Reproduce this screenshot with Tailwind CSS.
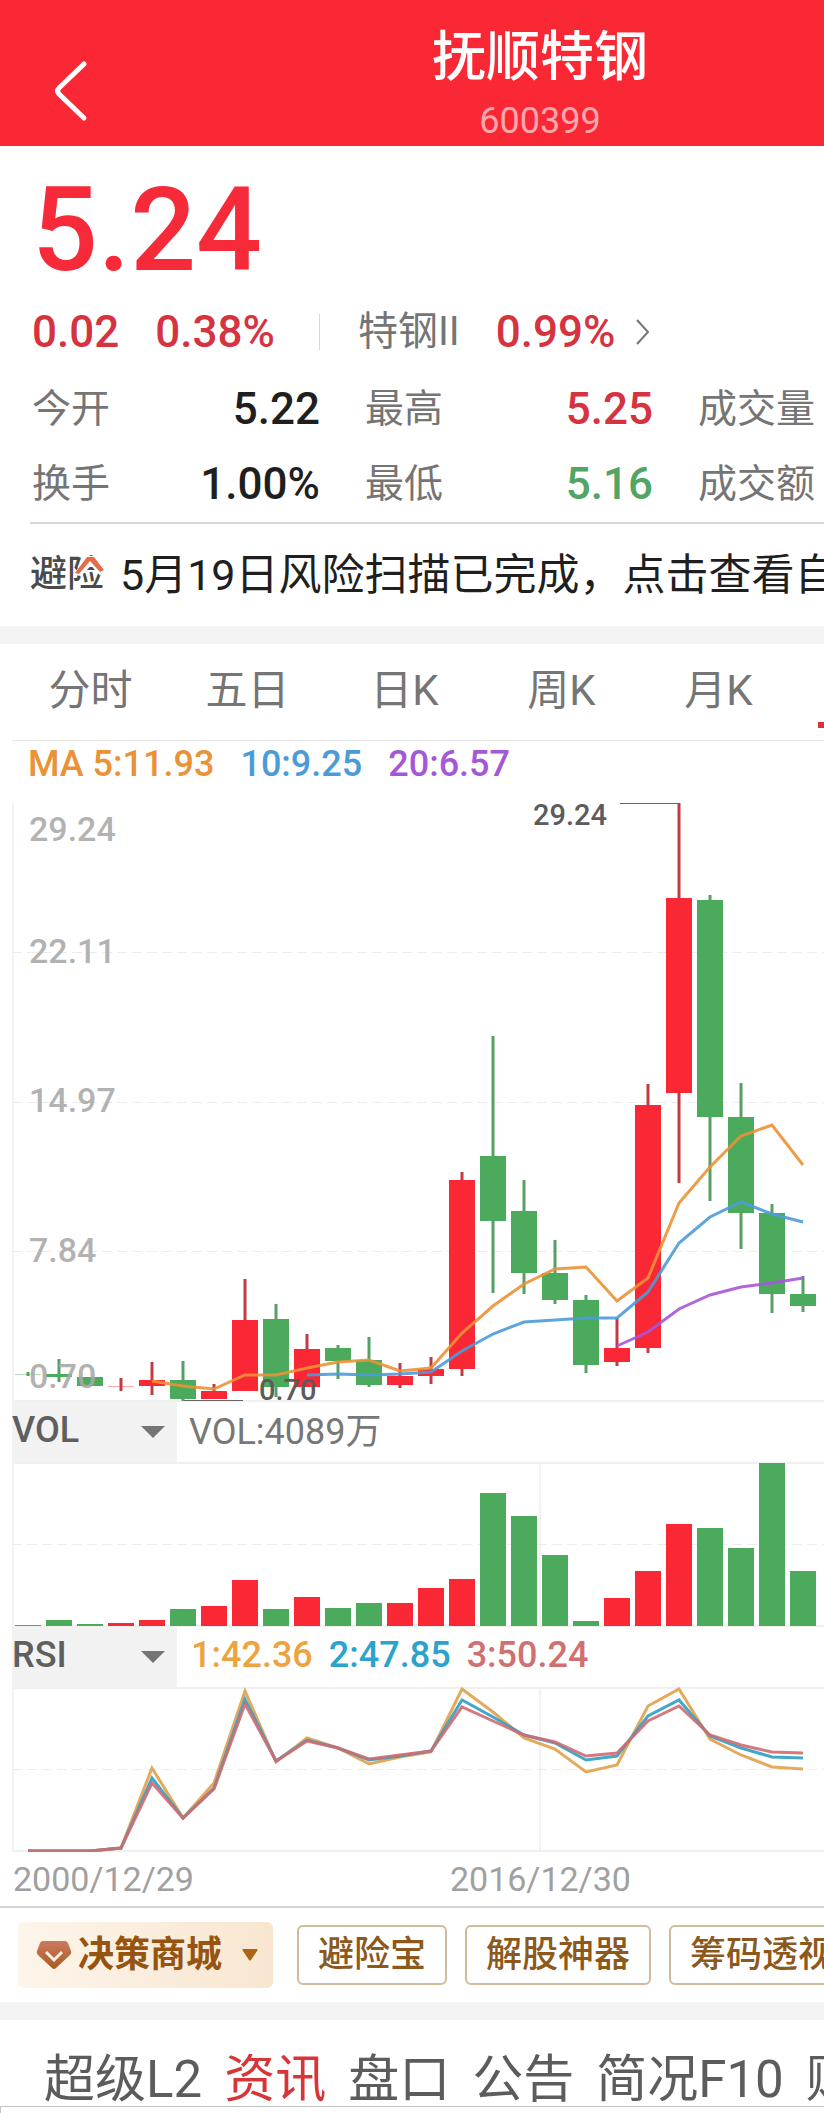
<!DOCTYPE html>
<html lang="zh-CN">
<head>
  <meta charset="UTF-8" />
  <meta name="viewport" content="width=device-width, initial-scale=1" />
  <title>抚顺特钢 600399</title>
  <script src="https://cdn.jsdelivr.net/npm/@tailwindcss/browser@4"></script>
</head>
<body class="bg-white min-h-screen overflow-x-hidden whitespace-nowrap font-['Roboto','Noto_Sans_CJK_SC',sans-serif]">

  <!-- Header -->
  <header class="flex h-[146px] bg-[#fa2734] text-white">
    <button class="w-64 shrink-0 pl-13 pt-9" aria-label="返回">
      <svg class="w-10 h-16" viewBox="0 0 40 64" fill="none" stroke="currentColor" stroke-width="5" stroke-linecap="round" stroke-linejoin="round">
        <path d="M32 5 L7 29 Q4 32 7 35 L32 59" />
      </svg>
    </button>
    <div class="flex-1 pt-[26px] text-center">
      <h1 class="text-[54px] leading-[64px] font-medium">抚顺特钢</h1>
      <p class="mt-2 text-[36px] leading-[46px] text-white/60">600399</p>
    </div>
  </header>

  <!-- Quote -->
  <section class="pt-6 pl-8 overflow-hidden">
    <div class="text-[116px] leading-[120px] font-medium text-[#f62a38]">5.24</div>

    <div class="mt-3 flex h-[60px] items-center text-[44px] font-medium text-[#d5333f]">
      <span>0.02</span>
      <span class="ml-9">0.38%</span>
      <span class="ml-11 h-9 w-px bg-[#d8d8d8]"></span>
      <a href="#" class="ml-[38px] flex items-center">
        <span class="text-[40px] font-normal text-[#757575]">特钢II</span>
        <span class="ml-9">0.99%</span>
        <svg class="ml-5 h-7 w-4" viewBox="0 0 16 28" fill="none" stroke="#757575" stroke-width="2">
          <path d="M2 2 L13 14 L2 26" />
        </svg>
      </a>
    </div>

    <dl class="mt-[10px] flex gap-[45px] text-[44px] font-medium leading-[75px] text-[#1f1f1f]">
      <div class="grid w-72 shrink-0 grid-cols-[auto_auto] justify-between">
        <dt class="text-[39px] font-normal text-[#757575]">今开</dt>
        <dd class="text-right">5.22</dd>
        <dt class="text-[39px] font-normal text-[#757575]">换手</dt>
        <dd class="text-right">1.00%</dd>
      </div>
      <div class="grid w-72 shrink-0 grid-cols-[auto_auto] justify-between">
        <dt class="text-[39px] font-normal text-[#757575]">最高</dt>
        <dd class="text-right text-[#d5333f]">5.25</dd>
        <dt class="text-[39px] font-normal text-[#757575]">最低</dt>
        <dd class="text-right text-[#52a564]">5.16</dd>
      </div>
      <div class="w-72 shrink-0 text-[39px] font-normal text-[#757575]">
        <dt>成交量</dt>
        <dt>成交额</dt>
      </div>
    </dl>
  </section>

  <!-- Risk notice -->
  <a href="#" class="ml-[30px] flex h-[104px] items-center overflow-hidden border-t-2 border-[#d8d8d8]">
    <span class="relative text-[37px] font-medium text-[#4a4a4a]">避险
      <svg class="absolute right-0 top-[9px] h-5 w-8" viewBox="0 0 32 20">
        <path d="M3 18 L16 -1 H22 L32 14 L28 18 L19 8 L9 19 Z" fill="#fff" stroke="#fff" stroke-width="2" />
        <path d="M3 17 L15 1 H22 L32 14 L28 16 L18 5 L7 18 Z" fill="#e26d48" />
      </svg>
    </span>
    <span class="ml-4 text-[43px] text-[#1f1f1f]">5月19日风险扫描已完成，点击查看自选股</span>
  </a>

  <div class="h-[18px] bg-[#f4f4f4]"></div>

  <!-- Period tabs -->
  <nav class="ml-3 flex h-[97px] overflow-hidden border-b border-[#e6e6e6] text-[42px] text-[#757575]">
    <button class="w-[157px] shrink-0 pb-1">分时</button>
    <button class="w-[157px] shrink-0 pb-1">五日</button>
    <button class="w-[157px] shrink-0 pb-1">日K</button>
    <button class="w-[157px] shrink-0 pb-1">周K</button>
    <button class="w-[157px] shrink-0 pb-1">月K</button>
    <button class="flex w-[157px] shrink-0 items-end justify-center pb-3" aria-label="年K">
      <span class="h-[6px] w-[115px] bg-[#d8333c]"></span>
    </button>
  </nav>

  <!-- K line -->
  <div class="flex h-[62px] gap-[26px] pl-7 text-[36px] font-medium leading-[46px]">
    <span class="text-[#eb9136]">MA 5:11.93</span>
    <span class="text-[#4c9bd9]">10:9.25</span>
    <span class="text-[#a657d8]">20:6.57</span>
  </div>
  <div class="pl-3">
    <svg id="kline" class="block h-[599px] w-full overflow-visible"></svg>
  </div>

  <!-- Volume -->
  <div class="flex h-[60px] items-center pl-3 text-[36px]">
    <div class="relative h-full w-[165px] bg-[#f2f2f2]">
      <select class="h-full w-full appearance-none pb-1 font-medium text-[#5f5f5f] outline-none" aria-label="副图指标一">
        <option>VOL</option>
      </select>
      <svg class="pointer-events-none absolute right-3 top-6 h-3 w-6" viewBox="0 0 24 12"><path d="M0 0 H24 L12 12 Z" fill="#757575" /></svg>
    </div>
    <span class="ml-3 text-[#777777]">VOL:4089万</span>
  </div>
  <div class="pl-3">
    <svg id="volume" class="block h-[165px] w-full"></svg>
  </div>

  <!-- RSI -->
  <div class="flex h-[60px] items-center pl-3 text-[36px]">
    <div class="relative h-full w-[165px] bg-[#f2f2f2]">
      <select class="h-full w-full appearance-none pb-1 font-medium text-[#5f5f5f] outline-none" aria-label="副图指标二">
        <option>RSI</option>
      </select>
      <svg class="pointer-events-none absolute right-3 top-6 h-3 w-6" viewBox="0 0 24 12"><path d="M0 0 H24 L12 12 Z" fill="#757575" /></svg>
    </div>
    <div class="ml-[14px] flex gap-4 pb-1 font-medium">
      <span class="text-[#eda340]">1:42.36</span>
      <span class="text-[#2ba3cc]">2:47.85</span>
      <span class="text-[#d17070]">3:50.24</span>
    </div>
  </div>
  <div class="pl-3">
    <svg id="rsi" class="block h-[165px] w-full"></svg>
  </div>
  <div class="flex h-[56px] items-center gap-64 border-b-2 border-[#d4d4d4] pl-[13px] text-[34px] text-[#a0a0a0]">
    <span>2000/12/29</span>
    <span>2016/12/30</span>
  </div>

  <!-- Tools -->
  <div class="flex h-[94px] items-center overflow-hidden pl-[18px] text-[36px] font-medium text-[#8c581c]">
    <button class="flex h-[66px] w-[255px] shrink-0 items-center rounded-md bg-linear-to-r from-[#fdf5ea] to-[#f8e6d0] pl-[18px] font-bold text-[#955510]">
      <svg class="h-[30px] w-9" viewBox="0 0 36 30">
        <defs>
          <linearGradient id="gem" x1="0" y1="0" x2="0" y2="1">
            <stop offset="0" stop-color="#cc7a60" />
            <stop offset="1" stop-color="#a85c20" />
          </linearGradient>
        </defs>
        <path d="M7 1 H29 Q31 1 32 3 L35 11 Q36 13 34 15 L20 28 Q18 30 16 28 L2 15 Q0 13 1 11 L4 3 Q5 1 7 1 Z" fill="url(#gem)" />
        <path d="M10 12 L18 20 L26 12" fill="none" stroke="#fdf0e2" stroke-width="3" />
      </svg>
      <span class="ml-[6px]">决策商城</span>
      <svg class="ml-5 h-3 w-4" viewBox="0 0 16 12"><path d="M1 0 H15 Q16 0 15 2 L9 11 Q8 12 7 11 L1 2 Q0 0 1 0 Z" fill="#ad6413" /></svg>
    </button>
    <button class="ml-6 h-[60px] shrink-0 rounded-md border-2 border-[#d0bc9a] px-[19px]">避险宝</button>
    <button class="ml-[18px] h-[60px] shrink-0 rounded-md border-2 border-[#d0bc9a] px-[19px]">解股神器</button>
    <button class="ml-[18px] h-[60px] shrink-0 rounded-md border-2 border-[#d0bc9a] px-[19px]">筹码透视</button>
  </div>

  <div class="h-[18px] bg-[#f4f4f4]"></div>

  <!-- Bottom tabs -->
  <nav class="flex gap-[22px] overflow-hidden pt-[34px] pl-11 text-[51px] leading-[52px] text-[#5c5c5c]">
    <button class="shrink-0">超级L2</button>
    <button class="shrink-0 text-[#d83538]">资讯</button>
    <button class="shrink-0">盘口</button>
    <button class="shrink-0">公告</button>
    <button class="shrink-0">简况F10</button>
    <button class="shrink-0">财务</button>
  </nav>
  <div class="h-[7px] border-t border-l border-[#c4c4c4]"></div>

  <script>
    const RED = '#fa2734';
    const GREEN = '#4caa5c';
    const STEP = 31;
    const BAR = 26;

    // color, high, body top, body bottom, low
    const candles = [
      ['g', 569, 571, 572, 573], ['g', 556, 571, 574, 579], ['g', 574, 574, 583, 583],
      ['r', 575, 583, 584, 588], ['r', 559, 577, 583, 592], ['g', 558, 577, 596, 598],
      ['r', 581, 588, 596, 596], ['r', 476, 517, 588, 588], ['g', 501, 516, 584, 594],
      ['r', 531, 546, 584, 584], ['g', 542, 545, 558, 576], ['g', 534, 557, 582, 584],
      ['r', 560, 573, 582, 585], ['r', 554, 566, 573, 581], ['r', 369, 377, 566, 573],
      ['g', 233, 353, 418, 490], ['g', 377, 408, 470, 491], ['g', 437, 470, 497, 501],
      ['g', 492, 497, 562, 570], ['r', 515, 545, 559, 563], ['r', 281, 302, 545, 550],
      ['r', 0, 95, 290, 380], ['g', 92, 97, 314, 398], ['g', 280, 314, 410, 446],
      ['g', 401, 410, 491, 510], ['g', 473, 491, 503, 509]
    ];
    const ma5 = [578, 583, 586, 572, 572, 565, 559, 557, 568, 565, 530, 503, 481, 466, 464, 498, 475, 400, 364, 333, 322, 362];
    const ma10 = [572, 571, 572, 571, 569, 548, 531, 519, 517, 515, 515, 489, 440, 414, 399, 411, 419];
    const ma20 = [543, 529, 506, 492, 484, 480, 475];
    const volumes = [1, 6, 2, 3, 6, 17, 20, 46, 17, 29, 18, 23, 23, 38, 47, 133, 110, 71, 5, 28, 55, 102, 98, 78, 163, 55];
    const rsi1 = [164, 164, 164, 161, 81, 131, 96, 4, 75, 51, 61, 77, 70, 65, 2, 25, 51, 62, 85, 78, 19, 2, 52, 68, 80, 82];
    const rsi2 = [164, 164, 164, 161, 91, 131, 101, 12, 74, 53, 61, 73, 69, 64, 13, 30, 48, 56, 73, 69, 29, 13, 49, 61, 70, 71];
    const rsi3 = [164, 164, 164, 161, 96, 131, 102, 17, 74, 54, 61, 72, 68, 64, 20, 34, 48, 55, 69, 66, 34, 19, 48, 58, 65, 66];

    const cx = i => 16 + i * STEP;
    const fillOf = c => (c === 'r' ? RED : GREEN);

    function line(values, start, color, width) {
      const points = values.map((y, i) => `${cx(start + i)},${y}`).join(' ');
      return `<polyline points="${points}" fill="none" stroke="${color}" stroke-width="${width}" stroke-opacity="0.9" />`;
    }

    function dashed(y) {
      return `<line x1="0" x2="100%" y1="${y}" y2="${y}" stroke="#ececec" stroke-width="1" stroke-dasharray="10 5" />`;
    }

    function solid(y) {
      return `<line x1="0" x2="100%" y1="${y}" y2="${y}" stroke="#f0f0f0" stroke-width="2" />`;
    }

    function vertical(x) {
      return `<line x1="${x}" x2="${x}" y1="0" y2="100%" stroke="#f2f2f2" stroke-width="2" />`;
    }

    function drawKline() {
      let out = vertical(1) + dashed(149.5) + dashed(299.5) + dashed(448.5) + solid(598);
      candles.forEach(([c, high, top, bottom, low], i) => {
        const wick = c === 'r' ? '#c23a45' : '#56a065';
        // Years with next to no range get a pale body
        const opacity = bottom - top <= 1 ? 0.4 : 1;
        out += `<rect x="${cx(i) - 1.5}" y="${high}" width="3" height="${low - high}" fill="${wick}" />`;
        out += `<rect x="${cx(i) - BAR / 2}" y="${top}" width="${BAR}" height="${bottom - top}" fill="${fillOf(c)}" fill-opacity="${opacity}" />`;
      });
      out += line(ma5, 4, '#eb9136', 3) + line(ma10, 9, '#4c9bd9', 3) + line(ma20, 19, '#a657d8', 3);

      // Price axis
      [['29.24', 38], ['22.11', 160], ['14.97', 309], ['7.84', 459], ['0.70', 585]].forEach(([label, y]) => {
        out += `<text x="17" y="${y}" font-size="34" font-weight="500" fill="#a8a8a8" fill-opacity="0.88">${label}</text>`;
      });

      // Highest and lowest marks
      out += `<path d="M608 0.5 H667 M172 597.5 H231" stroke="#666" stroke-width="1" />`;
      out += `<text x="521" y="22" font-size="29" fill="#5c5c5c" font-weight="500">29.24</text>`;
      out += `<text x="247" y="597" font-size="29" fill="#5c5c5c" font-weight="500">0.70</text>`;
      document.getElementById('kline').innerHTML = out;
    }

    function drawVolume() {
      let out = vertical(1) + vertical(528) + solid(1) + dashed(82.5) + solid(164);
      volumes.forEach((v, i) => {
        out += `<rect x="${cx(i) - BAR / 2}" y="${164 - v}" width="${BAR}" height="${v}" fill="${fillOf(candles[i][0])}" />`;
      });
      document.getElementById('volume').innerHTML = out;
    }

    function drawRsi() {
      document.getElementById('rsi').innerHTML =
        vertical(1) + vertical(528) + solid(1) + dashed(82.5) + solid(164) +
        line(rsi1, 0, '#e2a04a', 3) + line(rsi2, 0, '#2f9dc4', 3) + line(rsi3, 0, '#cf6c70', 3);
    }

    drawKline();
    drawVolume();
    drawRsi();
  </script>
</body>
</html>
